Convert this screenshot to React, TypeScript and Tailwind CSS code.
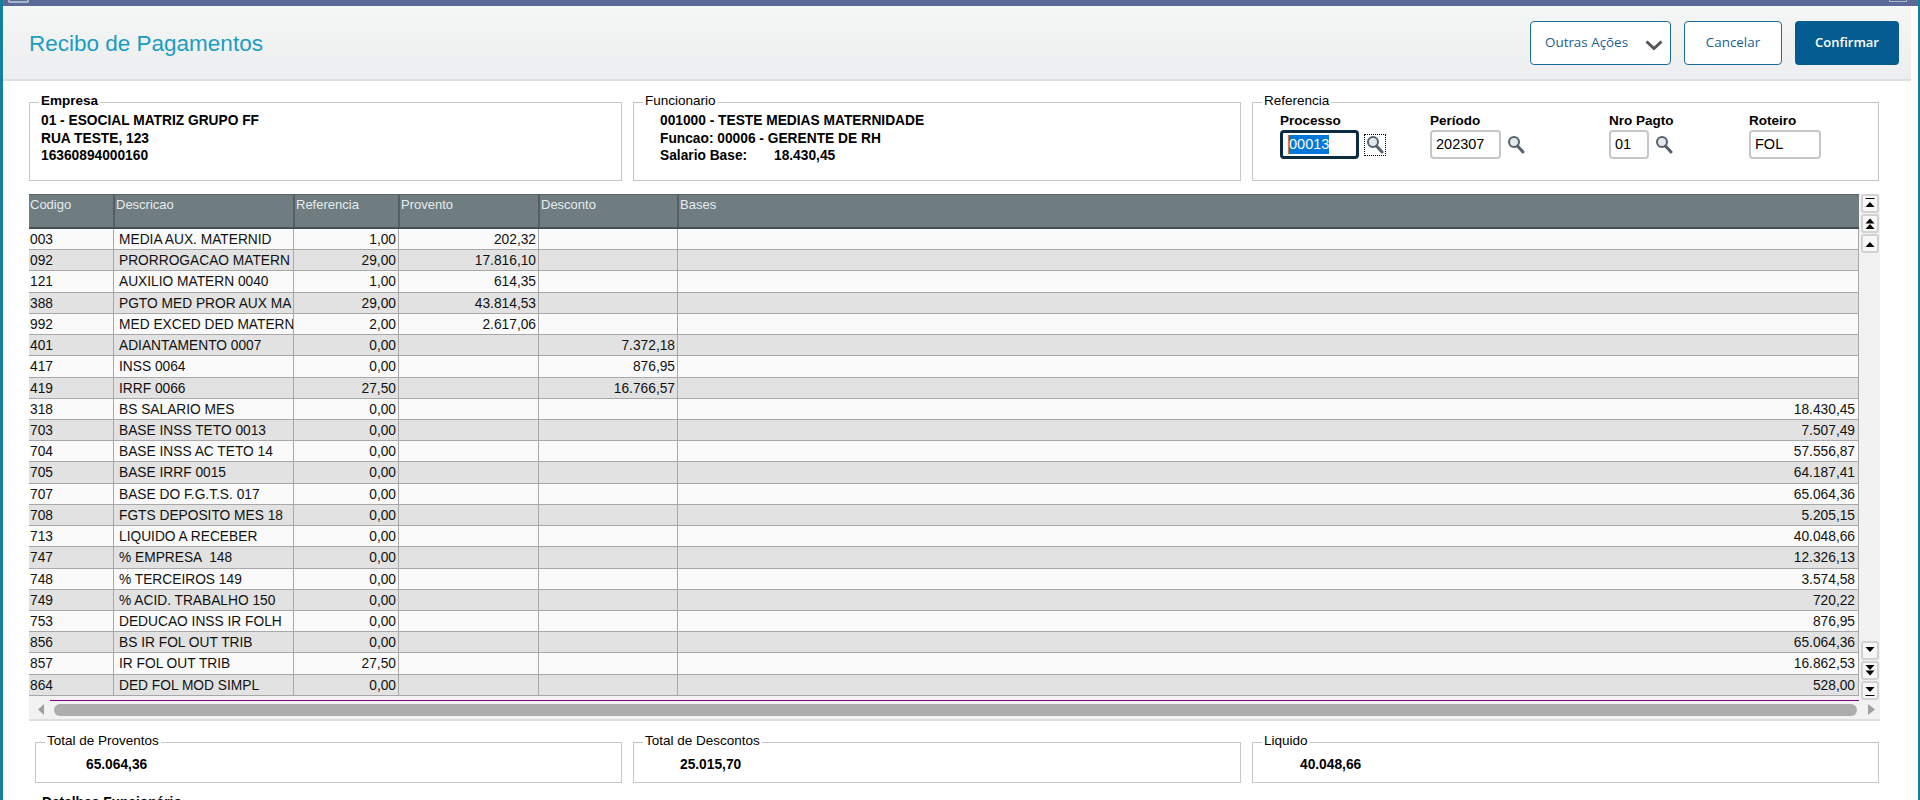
import React from 'react';

type Row = {
  codigo: string;
  descricao: string;
  referencia: string;
  provento?: string;
  desconto?: string;
  bases?: string;
};

const ROWS: Row[] = [
  { codigo: '003', descricao: 'MEDIA AUX. MATERNID', referencia: '1,00', provento: '202,32' },
  { codigo: '092', descricao: 'PRORROGACAO MATERN', referencia: '29,00', provento: '17.816,10' },
  { codigo: '121', descricao: 'AUXILIO MATERN 0040', referencia: '1,00', provento: '614,35' },
  { codigo: '388', descricao: 'PGTO MED PROR AUX MA', referencia: '29,00', provento: '43.814,53' },
  { codigo: '992', descricao: 'MED EXCED DED MATERN', referencia: '2,00', provento: '2.617,06' },
  { codigo: '401', descricao: 'ADIANTAMENTO 0007', referencia: '0,00', desconto: '7.372,18' },
  { codigo: '417', descricao: 'INSS 0064', referencia: '0,00', desconto: '876,95' },
  { codigo: '419', descricao: 'IRRF 0066', referencia: '27,50', desconto: '16.766,57' },
  { codigo: '318', descricao: 'BS SALARIO MES', referencia: '0,00', bases: '18.430,45' },
  { codigo: '703', descricao: 'BASE INSS TETO 0013', referencia: '0,00', bases: '7.507,49' },
  { codigo: '704', descricao: 'BASE INSS AC TETO 14', referencia: '0,00', bases: '57.556,87' },
  { codigo: '705', descricao: 'BASE IRRF 0015', referencia: '0,00', bases: '64.187,41' },
  { codigo: '707', descricao: 'BASE DO F.G.T.S. 017', referencia: '0,00', bases: '65.064,36' },
  { codigo: '708', descricao: 'FGTS DEPOSITO MES 18', referencia: '0,00', bases: '5.205,15' },
  { codigo: '713', descricao: 'LIQUIDO A RECEBER', referencia: '0,00', bases: '40.048,66' },
  { codigo: '747', descricao: '% EMPRESA  148', referencia: '0,00', bases: '12.326,13' },
  { codigo: '748', descricao: '% TERCEIROS 149', referencia: '0,00', bases: '3.574,58' },
  { codigo: '749', descricao: '% ACID. TRABALHO 150', referencia: '0,00', bases: '720,22' },
  { codigo: '753', descricao: 'DEDUCAO INSS IR FOLH', referencia: '0,00', bases: '876,95' },
  { codigo: '856', descricao: 'BS IR FOL OUT TRIB', referencia: '0,00', bases: '65.064,36' },
  { codigo: '857', descricao: 'IR FOL OUT TRIB', referencia: '27,50', bases: '16.862,53' },
  { codigo: '864', descricao: 'DED FOL MOD SIMPL', referencia: '0,00', bases: '528,00' },
];

const HEADERS = ['Codigo', 'Descricao', 'Referencia', 'Provento', 'Desconto', 'Bases'];

const COLS = 'grid grid-cols-[85px_180px_105px_140px_139px_1181px]';

const LupaIcon = () => (
  <svg width="18" height="19" viewBox="0 0 18 19">
    <circle cx="7" cy="7" r="5" fill="#e4e8ec" stroke="#55606c" strokeWidth="2" />
    <path d="M10.5 11 L16 17" stroke="#55606c" strokeWidth="3" strokeLinecap="round" />
  </svg>
);

// botoes de rolagem da grid: up = triangulo pra cima
const ScrollButton = ({ kind, up }: { kind: 'end' | 'page' | 'line'; up: boolean }) => (
  <div className="w-[18px] h-[19px] bg-[#f7f7f7] border-2 border-[#d2d2d2] rounded-[3px] flex items-center justify-center">
    <svg width="12" height="13" viewBox="0 0 12 13" className={up ? '' : 'rotate-180'}>
      {kind === 'end' && (
        <>
          <rect x="1.5" y="1" width="9" height="1" fill="#000" />
          <path d="M1.5 10 L6 5 L10.5 10 Z" fill="#000" />
        </>
      )}
      {kind === 'page' && (
        <>
          <path d="M1.5 6.5 L6 1.5 L10.5 6.5 Z" fill="#000" />
          <path d="M1.5 12 L6 7 L10.5 12 Z" fill="#000" />
        </>
      )}
      {kind === 'line' && <path d="M1.5 10 L6 5 L10.5 10 Z" fill="#000" />}
    </svg>
  </div>
);

const Box = ({
  legend,
  bold,
  className,
  children,
}: {
  legend: string;
  bold?: boolean;
  className: string;
  children: React.ReactNode;
}) => (
  <fieldset className={`shrink-0 border border-[#c6c6c6] ${className}`}>
    <legend className={`ml-[9px] px-[2px] h-[15px] leading-[12px] text-[13.5px] text-black ${bold ? 'font-bold' : ''}`}>
      {legend}
    </legend>
    {children}
  </fieldset>
);

const InputField = ({ label, value, width, lupa }: { label: string; value: string; width: string; lupa?: boolean }) => (
  <div>
    <div className="text-[13.5px] font-bold leading-[17px] text-black">{label}</div>
    <div className="flex items-center mt-[1px]">
      <div className={`${width} h-[29px] border-2 border-[#c3c7ca] rounded-[4px] pl-[4px] text-[14.5px] leading-[25px] text-black`}>
        {value}
      </div>
      {lupa && (
        <div className="ml-[6px]">
          <LupaIcon />
        </div>
      )}
    </div>
  </div>
);

export default function App() {
  return (
    <div className="w-[1920px] h-[800px] overflow-hidden bg-white flex font-['Liberation_Sans',Arial,sans-serif] text-[13.75px] text-[#111]">
      <div className="w-[3px] shrink-0 bg-[#157f9f]" />
      <div className="w-[1915px] shrink-0 flex flex-col">
        {/* barra da janela */}
        <div className="h-[6px] shrink-0 bg-[#5b6a9b] flex justify-between px-[5px] pr-[11px]">
          <div className="w-[21px] h-[3px] border-x-2 border-b-2 border-[#a9b4c6] rounded-b-[2px]" />
          <div className="w-[18px] h-[2px] border-x border-b border-[#a9b4c6]" />
        </div>

        <div className="h-[75px] shrink-0 mr-[7px] bg-gradient-to-b from-[#f5f6f6] to-[#eceeef] border-b-2 border-[#dedede] flex items-center justify-between pl-[26px] pr-[12px]">
          <h1 className="pt-[2px] text-[22.5px] leading-[26px] text-[#1b9dc2] font-normal">Recibo de Pagamentos</h1>
          <div className="flex items-center gap-[13px] font-['Open_Sans',sans-serif] text-[13.4px]">
            <button className="w-[141px] h-[44px] bg-white border-[1.5px] border-[#1b6c9c] rounded-[4px] text-[#1b5f8c] flex items-center justify-between pl-[14px] pr-[7px]">
              Outras Ações
              <svg width="18" height="11" viewBox="0 0 18 11" className="mt-[6px]">
                <path d="M1.5 1.5 L9 8.5 L16.5 1.5" fill="none" stroke="#555" strokeWidth="3" />
              </svg>
            </button>
            <button className="w-[98px] h-[44px] bg-white border-[1.5px] border-[#1b6c9c] rounded-[4px] text-[#1b5f8c]">
              Cancelar
            </button>
            <button className="w-[104px] h-[44px] bg-[#055c90] rounded-[4px] text-white text-[13px] font-semibold">Confirmar</button>
          </div>
        </div>

        <div className="shrink-0 pl-[26px]">
          <div className="mt-[14px] flex gap-x-[11px]">
            <Box legend="Empresa" bold className="w-[593px] h-[86px]">
              <div className="pl-[11px] pt-[2px] font-bold leading-[17.5px] text-black">
                <div>01 - ESOCIAL MATRIZ GRUPO FF</div>
                <div>RUA TESTE, 123</div>
                <div>16360894000160</div>
              </div>
            </Box>
            <Box legend="Funcionario" className="w-[608px] h-[86px]">
              <div className="pl-[26px] pt-[2px] font-bold leading-[17.5px] text-black">
                <div>001000 - TESTE MEDIAS MATERNIDADE</div>
                <div>Funcao: 00006 - GERENTE DE RH</div>
                <div className="flex">
                  <span className="w-[114px]">Salario Base:</span>
                  <span>18.430,45</span>
                </div>
              </div>
            </Box>
            <Box legend="Referencia" className="w-[627px] h-[86px]">
              <div className="flex pl-[27px] pt-[2px] text-black">
                <div className="w-[150px]">
                  <div className="text-[13.5px] font-bold leading-[17px]">Processo</div>
                  <div className="flex items-center mt-[1px]">
                    <div className="w-[79px] h-[29px] border-[3px] border-[#0b2b40] rounded-[4px] pl-[5px] flex items-center text-[14.5px]">
                      <span className="bg-[#0078d7] text-white border-l border-[#e8722a] leading-[19px]">00013</span>
                    </div>
                    <div className="ml-[5px] w-[22px] h-[22px] border border-dotted border-black flex items-center justify-center">
                      <LupaIcon />
                    </div>
                  </div>
                </div>
                <div className="w-[179px]">
                  <InputField label="Período" value="202307" width="w-[71px]" lupa />
                </div>
                <div className="w-[140px]">
                  <InputField label="Nro Pagto" value="01" width="w-[40px]" lupa />
                </div>
                <InputField label="Roteiro" value="FOL" width="w-[72px]" />
              </div>
            </Box>
          </div>

          {/* grid de verbas */}
          <div className="mt-[13px] w-[1851px]">
            <div className="flex h-[506px] bg-[#f2f2f2]">
              <div className="w-[1830px]">
                <div className={`${COLS} h-[35px] bg-[#6f7c80] border-t border-[#59646a] border-b-2 border-b-[#454e52] text-[13px] text-[#e6ecee]`}>
                  {HEADERS.map((h, i) => (
                    <div key={h} className={`pt-[1px] pl-[1px] leading-[17px] ${i === 0 ? '' : '-ml-[1px] border-l-2 border-[#555f63]'}`}>
                      {h}
                    </div>
                  ))}
                </div>
                {ROWS.map((r, i) => (
                  <div
                    key={r.codigo}
                    className={`${COLS} h-[21.23px] leading-[20px] border-b border-[#a8a8a8] ${i % 2 === 0 ? 'bg-[#fafafa]' : 'bg-[#e2e2e2]'}`}
                  >
                    <div className="pt-[1px] pl-[1px] border-r border-[#a8a8a8]">{r.codigo}</div>
                    <div className="pt-[1px] pl-[5px] border-r border-[#a8a8a8] overflow-hidden whitespace-pre">{r.descricao}</div>
                    <div className="pt-[1px] pr-[2px] text-right border-r border-[#a8a8a8]">{r.referencia}</div>
                    <div className="pt-[1px] pr-[2px] text-right border-r border-[#a8a8a8]">{r.provento}</div>
                    <div className="pt-[1px] pr-[2px] text-right border-r border-[#a8a8a8]">{r.desconto}</div>
                    <div className="pt-[1px] pr-[3px] text-right border-r border-[#a8a8a8]">{r.bases}</div>
                  </div>
                ))}
              </div>
              <div className="w-[21px] flex flex-col justify-between items-center pl-[1px]">
                <div className="flex flex-col gap-[1px]">
                  <ScrollButton kind="end" up />
                  <ScrollButton kind="page" up />
                  <ScrollButton kind="line" up />
                </div>
                <div className="flex flex-col gap-[1px]">
                  <ScrollButton kind="line" up={false} />
                  <ScrollButton kind="page" up={false} />
                  <ScrollButton kind="end" up={false} />
                </div>
              </div>
            </div>
            {/* barra de rolagem horizontal */}
            <div className="relative h-[21px] bg-[#f2f2f2] border-b-2 border-b-[#dedede] flex items-center">
              <div className="absolute left-[21px] right-[21px] top-0 h-[1px] bg-[#800080]" />
              <div className="w-[15px] flex justify-end">
                <svg width="6" height="11" viewBox="0 0 6 11">
                  <path d="M6 0 L0 5.5 L6 11 Z" fill="#a0a0a0" />
                </svg>
              </div>
              <div className="ml-[10px] w-[1803px] h-[12px] bg-[#adadad] rounded-[6px]" />
              <div className="ml-[11px]">
                <svg width="7" height="11" viewBox="0 0 7 11">
                  <path d="M0 0 L7 5.5 L0 11 Z" fill="#a0a0a0" />
                </svg>
              </div>
            </div>
          </div>

          <div className="mt-[14px] pl-[6px] flex gap-x-[11px]">
            <Box legend="Total de Proventos" className="w-[587px] h-[48px]">
              <div className="pl-[50px] pt-[5px] font-bold text-black">65.064,36</div>
            </Box>
            <Box legend="Total de Descontos" className="w-[608px] h-[48px]">
              <div className="pl-[46px] pt-[5px] font-bold text-black">25.015,70</div>
            </Box>
            <Box legend="Liquido" className="w-[627px] h-[48px]">
              <div className="pl-[47px] pt-[5px] font-bold text-black">40.048,66</div>
            </Box>
          </div>
          <div className="mt-[12px] pl-[13px] leading-[15px] text-black font-bold">Detalhes Funcionário</div>
        </div>
      </div>
      <div className="w-[2px] shrink-0 bg-[#157f9f]" />
    </div>
  );
}
